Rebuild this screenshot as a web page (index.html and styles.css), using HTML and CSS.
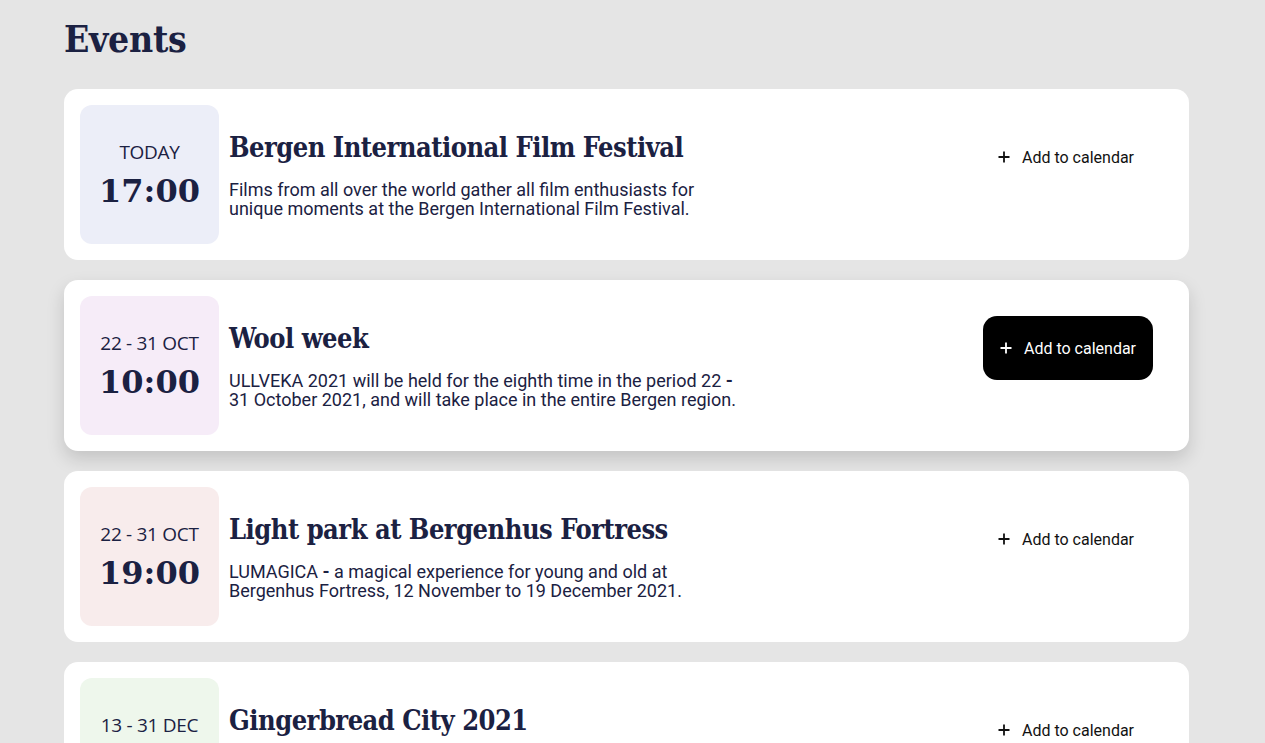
FILE: index.html
```html
<!DOCTYPE html>
<html lang="en">
<head>
<meta charset="utf-8">
<title>Events</title>
<link rel="stylesheet" href="styles.css">
</head>
<body>
<main class="page">
  <h1 class="page-title">Events</h1>
  <ul class="events">
    <li class="event">
      <div class="date date-blue">
        <span class="date-label">TODAY</span>
        <span class="date-time">17:00</span>
      </div>
      <div class="event-body">
        <h2 class="event-title">Bergen International Film Festival</h2>
        <p class="event-desc">Films from all over the world gather all film enthusiasts for<br>unique moments at the Bergen International Film Festival.</p>
      </div>
      <button class="add-btn" type="button"><svg class="plus" viewBox="0 0 12 12" width="12" height="12"><path d="M6 0.5v11M0.5 6h11" stroke="currentColor" stroke-width="1.8" fill="none"/></svg><span>Add to calendar</span></button>
    </li>
    <li class="event event-active">
      <div class="date date-violet">
        <span class="date-label">22 - 31 OCT</span>
        <span class="date-time">10:00</span>
      </div>
      <div class="event-body">
        <h2 class="event-title">Wool week</h2>
        <p class="event-desc">ULLVEKA 2021 will be held for the eighth time in the period 22 <b>-</b><br>31 October 2021, and will take place in the entire Bergen region.</p>
      </div>
      <button class="add-btn add-btn-active" type="button"><svg class="plus" viewBox="0 0 12 12" width="12" height="12"><path d="M6 0.5v11M0.5 6h11" stroke="currentColor" stroke-width="1.8" fill="none"/></svg><span>Add to calendar</span></button>
    </li>
    <li class="event">
      <div class="date date-rose">
        <span class="date-label">22 - 31 OCT</span>
        <span class="date-time">19:00</span>
      </div>
      <div class="event-body">
        <h2 class="event-title">Light park at Bergenhus Fortress</h2>
        <p class="event-desc">LUMAGICA <b>-</b> a magical experience for young and old at<br>Bergenhus Fortress, 12 November to 19 December 2021.</p>
      </div>
      <button class="add-btn" type="button"><svg class="plus" viewBox="0 0 12 12" width="12" height="12"><path d="M6 0.5v11M0.5 6h11" stroke="currentColor" stroke-width="1.8" fill="none"/></svg><span>Add to calendar</span></button>
    </li>
    <li class="event">
      <div class="date date-green">
        <span class="date-label">13 - 31 DEC</span>
        <span class="date-time">10:00</span>
      </div>
      <div class="event-body">
        <h2 class="event-title">Gingerbread City 2021</h2>
        <p class="event-desc">Gingerbread City is back in Bergen, with hundreds of small<br>gingerbread houses made by children and adults.</p>
      </div>
      <button class="add-btn" type="button"><svg class="plus" viewBox="0 0 12 12" width="12" height="12"><path d="M6 0.5v11M0.5 6h11" stroke="currentColor" stroke-width="1.8" fill="none"/></svg><span>Add to calendar</span></button>
    </li>
  </ul>
</main>
</body>
</html>
```
FILE: styles.css
```css
* { box-sizing: border-box; }
html, body { margin: 0; padding: 0; }
body {
  background: #e5e5e5;
  color: #1b2142;
  font-family: "Roboto", "Liberation Sans", sans-serif;
}
.page {
  padding: 15px 76px 40px 64px;
}
.page-title {
  margin: 0 0 26px;
  font-family: "DejaVu Serif Condensed", "DejaVu Serif", serif;
  font-weight: bold;
  font-size: 37px;
  line-height: 48px;
  letter-spacing: -0.3px;
  color: #1b2142;
}
.events {
  list-style: none;
  margin: 0;
  padding: 0;
  display: flex;
  flex-direction: column;
  gap: 20px;
}
.event {
  display: flex;
  align-items: flex-start;
  background: #fff;
  border-radius: 14px;
  padding: 16px;
}
.event-active {
  box-shadow: 0 8px 18px rgba(0, 0, 0, 0.15);
}
.date {
  flex: 0 0 139px;
  height: 139px;
  border-radius: 12px;
  display: flex;
  flex-direction: column;
  align-items: center;
  justify-content: center;
  gap: 8px;
}
.date-blue { background: #eceef8; }
.date-violet { background: #f6ecf8; }
.date-rose { background: #f8ecec; }
.date-green { background: #eef7ec; }
.date-label {
  font-family: "Open Sans", sans-serif;
  font-size: 19px;
  line-height: 24px;
  letter-spacing: -0.3px;
  color: #1b2142;
}
.date-time {
  font-family: "DejaVu Serif", serif;
  font-weight: bold;
  font-size: 32px;
  line-height: 38px;
  color: #1b2142;
}
.event-body {
  flex: 1;
  padding: 26px 0 0 10px;
}
.event-title {
  margin: 0;
  font-family: "DejaVu Serif Condensed", "DejaVu Serif", serif;
  font-weight: bold;
  font-size: 27px;
  line-height: 34px;
  letter-spacing: -0.5px;
  color: #1b2142;
}
.event-desc {
  margin: 15px 0 0;
  font-family: "Roboto", sans-serif;
  font-size: 18px;
  line-height: 19px;
  color: #1b2142;
}
.event-desc b { font-weight: bold; }
.add-btn {
  margin: 20px 22px 0 0;
  width: 170px;
  height: 64px;
  border: 0;
  border-radius: 14px;
  background: transparent;
  color: #111;
  display: flex;
  align-items: center;
  justify-content: center;
  gap: 12px;
  font-family: "Roboto", sans-serif;
  font-size: 16px;
  cursor: pointer;
}
.add-btn-active {
  margin-right: 20px;
  background: #000;
  color: #fff;
}
.plus { flex: 0 0 12px; }
```
